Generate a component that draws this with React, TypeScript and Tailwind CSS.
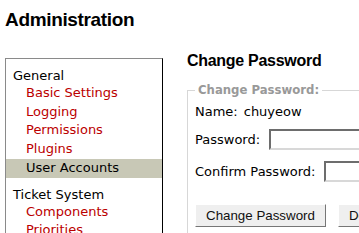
// Trac admin panel: left nav box with grouped links, and the "Change Password" form.
const GROUPS = [
  {
    title: 'General',
    items: ['Basic Settings', 'Logging', 'Permissions', 'Plugins', 'User Accounts'],
  },
  { title: 'Ticket System', items: ['Components', 'Priorities'] },
]

const ACTIVE = 'User Accounts'

function NavBox() {
  return (
    <div className="mt-[7px] w-[158px] shrink-0 border border-t-[#8a8a8a] border-l-[#8a8a8a] border-r-black border-b-black pt-[8px] pb-2">
      {GROUPS.map((g, i) => (
        <div key={g.title} className={i > 0 ? 'mt-[8px]' : ''}>
          <div className="pl-[7px] leading-[17px] text-black">{g.title}</div>
          <ul>
            {g.items.map((item) => (
              <li
                key={item}
                className={
                  item === ACTIVE
                    ? 'bg-[#c8c8b6] pl-[20px] leading-[18.7px] text-black'
                    : 'pl-[20px] leading-[18.7px] text-[#bb0000]'
                }
              >
                {item}
              </li>
            ))}
          </ul>
        </div>
      ))}
    </div>
  )
}

function Field({ label, className }: { label: string; className: string }) {
  return (
    <div className={`flex h-[21px] items-center whitespace-nowrap ${className}`}>
      <span>{label}</span>
      <span className="ml-[9px] h-[21px] w-[160px] shrink-0 border-2 border-t-[#6d6d6d] border-l-[#6d6d6d] border-r-[#d8d8d8] border-b-[#d8d8d8] bg-white" />
    </div>
  )
}

function Button({ children }: { children: React.ReactNode }) {
  return (
    <span className="flex h-[23px] shrink-0 items-center whitespace-nowrap border border-t-white border-l-white border-r-[#767676] border-b-[#767676] bg-[#efefef] px-[10px] font-['Liberation_Sans',Arial,sans-serif] text-[13.33px] text-[#111]">
      {children}
    </span>
  )
}

export default function App() {
  return (
    <div className="h-[233px] w-[359px] overflow-hidden bg-white pl-[5px] font-['DejaVu_Sans',Verdana,sans-serif] text-[13px] text-black">
      <h1 className="mt-[9px] font-['Liberation_Sans',Arial,sans-serif] text-[19px] font-bold leading-[22px] tracking-[-0.018em]">
        Administration
      </h1>
      <div className="mt-[20px] flex items-start">
        <NavBox />
        <div className="ml-[24px] w-[320px] shrink-0">
          <h2 className="font-['Liberation_Sans',Arial,sans-serif] text-[16px] font-bold leading-[19px] tracking-[-0.018em]">
            Change Password
          </h2>
          <fieldset className="mt-[13px] border border-[#d7d7d7] px-[7px] pt-[7px] pb-3">
            <legend className="px-[3px] text-[11.7px] font-bold leading-[14px] text-[#999]">
              Change Password:
            </legend>
            <div className="flex leading-[15px]">
              <span>Name:</span>
              <span className="ml-[6px]">chuyeow</span>
            </div>
            <Field label="Password:" className="mt-[10px]" />
            <Field label="Confirm Password:" className="mt-[11px]" />
            <div className="mt-[22px] flex gap-[12px]">
              <Button>Change Password</Button>
              <Button>Delete</Button>
            </div>
          </fieldset>
        </div>
      </div>
    </div>
  )
}
